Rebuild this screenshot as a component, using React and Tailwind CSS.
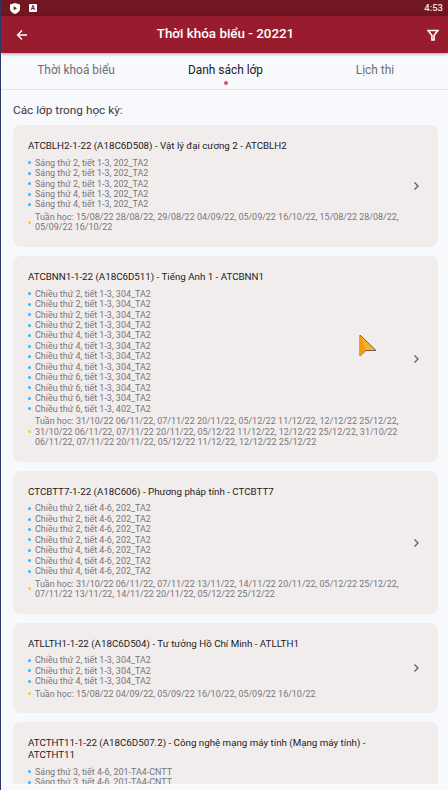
const repeat = (text, n) => Array(n).fill(text)

const classes = [
  {
    title: 'ATCBLH2-1-22 (A18C6D508) - Vật lý đại cương 2 - ATCBLH2',
    slots: [...repeat('Sáng thứ 2, tiết 1-3, 202_TA2', 3), ...repeat('Sáng thứ 4, tiết 1-3, 202_TA2', 2)],
    weeks: 'Tuần học: 15/08/22 28/08/22, 29/08/22 04/09/22, 05/09/22 16/10/22, 15/08/22 28/08/22, 05/09/22 16/10/22',
  },
  {
    title: 'ATCBNN1-1-22 (A18C6D511) - Tiếng Anh 1 - ATCBNN1',
    slots: [
      ...repeat('Chiều thứ 2, tiết 1-3, 304_TA2', 4),
      ...repeat('Chiều thứ 4, tiết 1-3, 304_TA2', 4),
      ...repeat('Chiều thứ 6, tiết 1-3, 304_TA2', 3),
      'Chiều thứ 6, tiết 1-3, 402_TA2',
    ],
    weeks: 'Tuần học: 31/10/22 06/11/22, 07/11/22 20/11/22, 05/12/22 11/12/22, 12/12/22 25/12/22, 31/10/22 06/11/22, 07/11/22 20/11/22, 05/12/22 11/12/22, 12/12/22 25/12/22, 31/10/22 06/11/22, 07/11/22 20/11/22, 05/12/22 11/12/22, 12/12/22 25/12/22',
  },
  {
    title: 'CTCBTT7-1-22 (A18C606) - Phương pháp tính - CTCBTT7',
    slots: [...repeat('Chiều thứ 2, tiết 4-6, 202_TA2', 4), ...repeat('Chiều thứ 4, tiết 4-6, 202_TA2', 3)],
    weeks: 'Tuần học: 31/10/22 06/11/22, 07/11/22 13/11/22, 14/11/22 20/11/22, 05/12/22 25/12/22, 07/11/22 13/11/22, 14/11/22 20/11/22, 05/12/22 25/12/22',
  },
  {
    title: 'ATLLTH1-1-22 (A18C6D504) - Tư tưởng Hồ Chí Minh - ATLLTH1',
    slots: [...repeat('Chiều thứ 2, tiết 1-3, 304_TA2', 2), 'Chiều thứ 4, tiết 1-3, 304_TA2'],
    weeks: 'Tuần học: 15/08/22 04/09/22, 05/09/22 16/10/22, 05/09/22 16/10/22',
  },
  {
    title: 'ATCTHT11-1-22 (A18C6D507.2) - Công nghệ mạng máy tính (Mạng máy tính) - ATCTHT11',
    slots: repeat('Sáng thứ 3, tiết 4-6, 201-TA4-CNTT', 2),
  },
]

function ClassCard({ title, slots, weeks }) {
  return (
    <div className="flex shrink-0 items-center rounded-[8px] bg-[#f2eded] pl-[15px] pr-[18px] pt-[15px] pb-[14.3px]">
      <div className="min-w-0 flex-1">
        <p className="w-[372px] text-[9.75px] leading-[11.6px] text-[#1c1a1b]">{title}</p>
        <div className="mt-[6px] text-[8.95px] leading-[10.45px] text-[#77757a]">
          {slots.map((s, i) => (
            <div key={i} className="flex items-center gap-[4px]">
              <span className="h-[3px] w-[3px] shrink-0 rounded-full bg-[#35b5f4]" />
              <span>{s}</span>
            </div>
          ))}
          {weeks && (
            <div className="mt-[2px] flex items-center gap-[4px]">
              <span className="h-[3px] w-[3px] shrink-0 rounded-full bg-[#fbc93d]" />
              <span className="w-[368px]">{weeks}</span>
            </div>
          )}
        </div>
      </div>
      {weeks && (
        <svg viewBox="0 0 8 10" className="h-[10px] w-[8px] shrink-0" fill="none" stroke="#5f5d63" strokeWidth="1.3">
          <path d="M2.5 1.5 L6 5 L2.5 8.5" />
        </svg>
      )}
    </div>
  )
}

export default function App() {
  return (
    <div
      className="relative flex h-[790px] w-[448px] flex-col overflow-hidden border-l border-[#2d3864] bg-[#f8f9fd]"
      style={{ fontFamily: 'Roboto, sans-serif' }}
    >
      <div className="flex h-[16px] shrink-0 items-center justify-between bg-[#701722] pl-[9px] pr-[5px]">
        <div className="flex items-center gap-[9px]">
          <svg viewBox="0 0 10 11" className="h-[11px] w-[10px]">
            <path d="M5 0 L10 1.6 V6 C10 8.5 7.5 10 5 11 C2.5 10 0 8.5 0 6 V1.6 Z" fill="#fff" />
            <path d="M3.7 3.2 L7 5.2 L3.7 7.2 Z" fill="#701722" />
          </svg>
          <div className="flex h-[8px] w-[8px] items-center justify-center rounded-[1px] bg-white text-[6.5px] font-bold leading-none text-[#701722]">
            A
          </div>
        </div>
        <span className="text-[9.5px] font-medium text-[#f3e3e5]">4:53</span>
      </div>

      <div className="relative z-10 flex h-[37px] shrink-0 items-center justify-between bg-[#991c2e] pl-[15px] pr-[9px] shadow-[0_1px_3px_rgba(0,0,0,0.35)]">
        <svg viewBox="0 0 12 12" className="h-[12px] w-[12px]" fill="none" stroke="#fff" strokeWidth="1.4">
          <path d="M11 6 H1.5 M6 1.5 L1.5 6 L6 10.5" />
        </svg>
        <h1 className="mr-[4px] text-[13.4px] font-medium text-white">Thời khóa biểu - 20221</h1>
        <svg viewBox="0 0 12 12" className="h-[12px] w-[12px]" fill="none" stroke="#fff" strokeWidth="1.6">
          <path d="M1 1.5 H11 L7.1 6.2 V11 H4.9 V6.2 Z" />
        </svg>
      </div>

      <div className="grid h-[37px] shrink-0 grid-cols-[150px_149px_1fr] border-b border-[#e3e4e8] text-[11.9px]">
        <button className="text-[#6f6e73]">Thời khoá biểu</button>
        <button className="relative text-[#232224]">
          Danh sách lớp
          <span className="absolute bottom-[4px] left-1/2 h-[4px] w-[4px] -translate-x-1/2 rounded-full bg-[#e1505f]" />
        </button>
        <button className="pl-[2px] text-[#6f6e73]">Lịch thi</button>
      </div>

      <p className="ml-[12px] mt-[13px] text-[11.8px] leading-[14px] text-[#3a393c]">Các lớp trong học kỳ:</p>

      <div className="mb-[6px] mt-[8px] flex min-h-0 flex-1 flex-col gap-[9px] overflow-hidden pl-[12px] pr-[10px]">
        {classes.map((c) => (
          <ClassCard key={c.title} {...c} />
        ))}
      </div>

      <svg viewBox="0 0 18 23" className="absolute left-[358px] top-[334px] h-[23px] w-[18px]">
        <path d="M1 1 L17 16.5 L7 16.5 L1 22 Z" fill="#fbb02a" stroke="#5b5140" strokeWidth="0.9" strokeLinejoin="round" />
        <path d="M1 1 L7 16.5 L1 22 Z" fill="#f59a13" />
      </svg>
    </div>
  )
}
